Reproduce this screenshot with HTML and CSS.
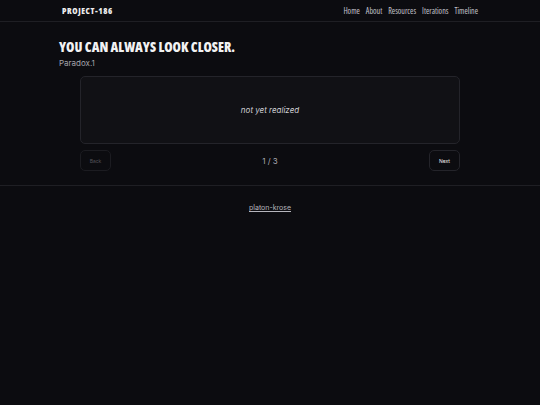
FILE: index.html
```html
<!DOCTYPE html>
<html lang="en">
<head>
    <meta charset="UTF-8">
    <meta name="viewport" content="width=device-width, initial-scale=1.0">
    <title>Project-186</title>
    <link rel="stylesheet" href="styles.css">
</head>
<body>
    <header class="site-header">
        <div class="header-inner">
            <a class="brand" href="#">PROJECT-186</a>
            <nav class="nav">
                <a href="#">Home</a>
                <a href="#">About</a>
                <a href="#">Resources</a>
                <a href="#">Iterations</a>
                <a href="#">Timeline</a>
            </nav>
        </div>
    </header>

    <main class="main">
        <h1 class="title">YOU CAN ALWAYS LOOK CLOSER.</h1>
        <p class="subtitle">Paradox.1</p>

        <div class="viewer">
            <div class="card">
                <p class="placeholder">not yet realized</p>
            </div>
            <div class="pager">
                <button type="button" class="btn btn-back" disabled>Back</button>
                <span class="count">1 / 3</span>
                <button type="button" class="btn btn-next">Next</button>
            </div>
        </div>
    </main>

    <footer class="site-footer">
        <a href="#">platon-krose</a>
    </footer>
</body>
</html>
```

FILE: styles.css
```css
body {
    margin: 0;
    background-color: #0c0c10;
    color: #e6e6e6;
    font-family: Inter, "Liberation Sans", sans-serif;
}

a {
    color: inherit;
    text-decoration: none;
}

.site-header {
    border-bottom: 1px solid #1f1f24;
}

.header-inner {
    max-width: 416px;
    margin: 0 auto;
    height: 21px;
    display: flex;
    align-items: center;
    justify-content: space-between;
}

.brand {
    font-family: "Open Sans", sans-serif;
    font-stretch: 75%;
    font-weight: 800;
    font-size: 8.5px;
    letter-spacing: 0.6px;
    color: #ececec;
}

.nav {
    display: flex;
    gap: 6px;
}

.nav a {
    font-family: "Open Sans", sans-serif;
    font-stretch: 75%;
    font-weight: 500;
    font-size: 8px;
    color: #c4c4cc;
}

.main {
    max-width: 422px;
    margin: 0 auto;
    padding: 17px 0 14px;
}

.title {
    margin: 0;
    font-family: "Open Sans", sans-serif;
    font-stretch: 75%;
    font-weight: 800;
    font-size: 13.5px;
    letter-spacing: 0;
    color: #f2f2f2;
    line-height: 16px;
}

.subtitle {
    margin: 3px 0 0;
    font-size: 8px;
    color: #a4a4ab;
}

.viewer {
    max-width: 380px;
    margin: 8px auto 0;
}

.card {
    height: 66px;
    background: #111115;
    border: 1px solid #24242a;
    border-radius: 5px;
    display: flex;
    align-items: center;
    justify-content: center;
}

.placeholder {
    margin: 0;
    font-style: italic;
    font-size: 8px;
    color: #cfcfd4;
}

.pager {
    display: flex;
    align-items: center;
    justify-content: space-between;
    margin-top: 6px;
}

.btn {
    height: 21px;
    padding: 0;
    font-family: Inter, "Liberation Sans", sans-serif;
    font-size: 5px;
    background: #0c0c10;
    border: 1px solid #1c1c21;
    border-radius: 5px;
    color: #f0f0f0;
}

.btn-back {
    width: 31px;
    color: #55555c;
}

.btn-next {
    width: 31px;
    border-color: #24242a;
}

.count {
    font-size: 8px;
    color: #a9a9b0;
}

.site-footer {
    border-top: 1px solid #1f1f24;
    text-align: center;
    padding-top: 13px;
    line-height: 10px;
}

.site-footer a {
    font-size: 7px;
    color: #b5b5bc;
    text-decoration: underline;
}
```
